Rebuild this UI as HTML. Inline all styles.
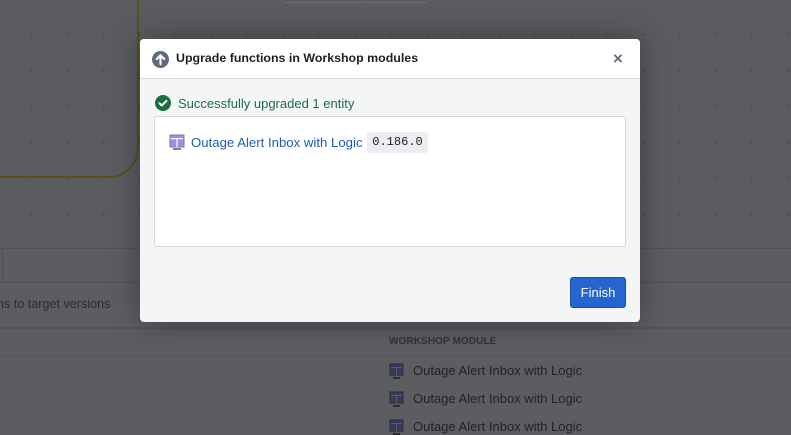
<!DOCTYPE html>
<html><head><meta charset="utf-8"><style>
*{box-sizing:border-box;margin:0;padding:0}
html,body{width:791px;height:435px;overflow:hidden}
body{position:relative;background:#5b5c60;font-family:"Liberation Sans",sans-serif;}
.abs{position:absolute;white-space:nowrap}
.dot{position:absolute;width:3px;height:3px;border-radius:50%;background:#505256}
.modal{left:140px;top:39px;width:500px;height:283px;background:#f4f5f7;border-radius:4px;box-shadow:0 0 30px rgba(0,0,0,.35);overflow:hidden}
.hdr{height:40px;background:#fff;border-bottom:1px solid #d6d9dd;position:relative}
.wsi{display:inline-block;vertical-align:middle}
</style></head><body>
<div id="dots"></div>
<script>
var h='';for(var y=34;y<248;y+=36)for(var x=31;x<791;x+=36)h+='<div class="dot" style="left:'+(x-1)+'px;top:'+(y-1)+'px"></div>';document.getElementById('dots').innerHTML=h;
</script>
<div class="abs" style="left:-40px;top:-20px;width:179px;height:198px;border:2px solid #5e4d22;border-top:none;border-left:none;border-radius:0 0 30px 0"></div>
<div class="abs" style="left:282px;top:-4px;width:147px;height:7px;border:1px solid #6a6c70;border-radius:3px"></div>
<div class="abs" style="left:364px;top:0;width:1px;height:3px;background:#6a6c70"></div>
<div class="abs" style="left:0;top:248px;width:791px;height:187px;background:#5c5d61;border-top:1px solid #505256"></div>
<div class="abs" style="left:0;top:282px;width:791px;height:1px;background:#505256"></div>
<div class="abs" style="left:2px;top:248px;width:1px;height:34px;background:#505256"></div>
<div class="abs" style="left:-3px;top:297px;font-size:12.6px;color:#2a2c30">ns to target versions</div>
<div class="abs" style="left:0;top:327px;width:791px;height:2px;background:#535559"></div>
<div class="abs" style="left:389px;top:336px;font-size:10px;font-weight:bold;color:#2f3236;letter-spacing:.1px">WORKSHOP MODULE</div>
<div class="abs" style="left:0;top:355px;width:791px;height:1px;background:#535559"></div>
<div class="abs" style="left:389px;top:362px;font-size:13px;color:#202226;line-height:18px"><span class="wsi" style="width:15px;height:18px;margin-right:9px"><svg width="15" height="18"><rect x="1" y="1" width="13" height="11" fill="#3a3760" stroke="#2a2c30"/><rect x="2" y="4" width="11" height="1" fill="#5c5d61"/><rect x="7" y="5" width="1" height="7" fill="#5c5d61"/><rect x="4" y="14" width="7" height="2" fill="#2a2c30"/></svg></span>Outage Alert Inbox with Logic</div>
<div class="abs" style="left:389px;top:390px;font-size:13px;color:#202226;line-height:18px"><span class="wsi" style="width:15px;height:18px;margin-right:9px"><svg width="15" height="18"><rect x="1" y="1" width="13" height="11" fill="#3a3760" stroke="#2a2c30"/><rect x="2" y="4" width="11" height="1" fill="#5c5d61"/><rect x="7" y="5" width="1" height="7" fill="#5c5d61"/><rect x="4" y="14" width="7" height="2" fill="#2a2c30"/></svg></span>Outage Alert Inbox with Logic</div>
<div class="abs" style="left:389px;top:418px;font-size:13px;color:#202226;line-height:18px"><span class="wsi" style="width:15px;height:18px;margin-right:9px"><svg width="15" height="18"><rect x="1" y="1" width="13" height="11" fill="#3a3760" stroke="#2a2c30"/><rect x="2" y="4" width="11" height="1" fill="#5c5d61"/><rect x="7" y="5" width="1" height="7" fill="#5c5d61"/><rect x="4" y="14" width="7" height="2" fill="#2a2c30"/></svg></span>Outage Alert Inbox with Logic</div>

<div class="abs modal">
 <div class="hdr">
  <svg class="abs" style="left:12px;top:12px" width="17" height="17" viewBox="0 0 16 16"><circle cx="8" cy="8" r="8" fill="#5f6b7c"/><path d="M8 12.5V4M4.5 7.5L8 4l3.5 3.5" stroke="#fff" stroke-width="2" fill="none" stroke-linecap="round" stroke-linejoin="round"/></svg>
  <div class="abs" style="left:36px;top:12px;font-size:12.4px;font-weight:bold;color:#1c2127">Upgrade functions in Workshop modules</div>
  <div class="abs" style="left:473px;top:10px;font-size:17px;font-weight:bold;color:#5f6b7c">×</div>
 </div>
 <svg class="abs" style="left:15px;top:56px" width="16" height="16" viewBox="0 0 16 16"><circle cx="8" cy="8" r="8" fill="#1c6e42"/><path d="M4.5 8.3l2.3 2.2 4.6-4.6" stroke="#fff" stroke-width="2" fill="none" stroke-linecap="round" stroke-linejoin="round"/></svg>
 <div class="abs" style="left:38px;top:57px;font-size:13px;color:#1c6e42">Successfully upgraded 1 entity</div>
 <div class="abs" style="left:14px;top:77px;width:472px;height:131px;background:#fff;border:1px solid #d3d8de;border-radius:3px">
  <svg class="abs" style="left:14px;top:17px" width="16" height="18" viewBox="0 0 16 18"><rect x="1" y="1" width="14" height="12" fill="#9a8ff0" stroke="#7a7f8a"/><rect x="2" y="4" width="12" height="1.2" fill="#fff"/><rect x="7.4" y="5" width="1.2" height="8" fill="#fff"/><rect x="4" y="14" width="8" height="2" fill="#7a7f8a"/></svg>
  <div class="abs" style="left:36px;top:18px;font-size:13.2px;color:#215db0">Outage Alert Inbox with Logic</div>
  <div class="abs" style="left:212px;top:15px;width:61px;height:21px;background:#ebedf0;border-radius:3px;font-family:'Liberation Mono',monospace;font-size:12px;color:#1c2127;text-align:center;line-height:21px">0.186.0</div>
 </div>
 <div class="abs" style="left:430px;top:238px;width:56px;height:31px;background:#2565cf;border:1px solid #1b4fa8;border-radius:3px;color:#fff;font-size:13px;text-align:center;line-height:29px">Finish</div>
</div>
</body></html>
